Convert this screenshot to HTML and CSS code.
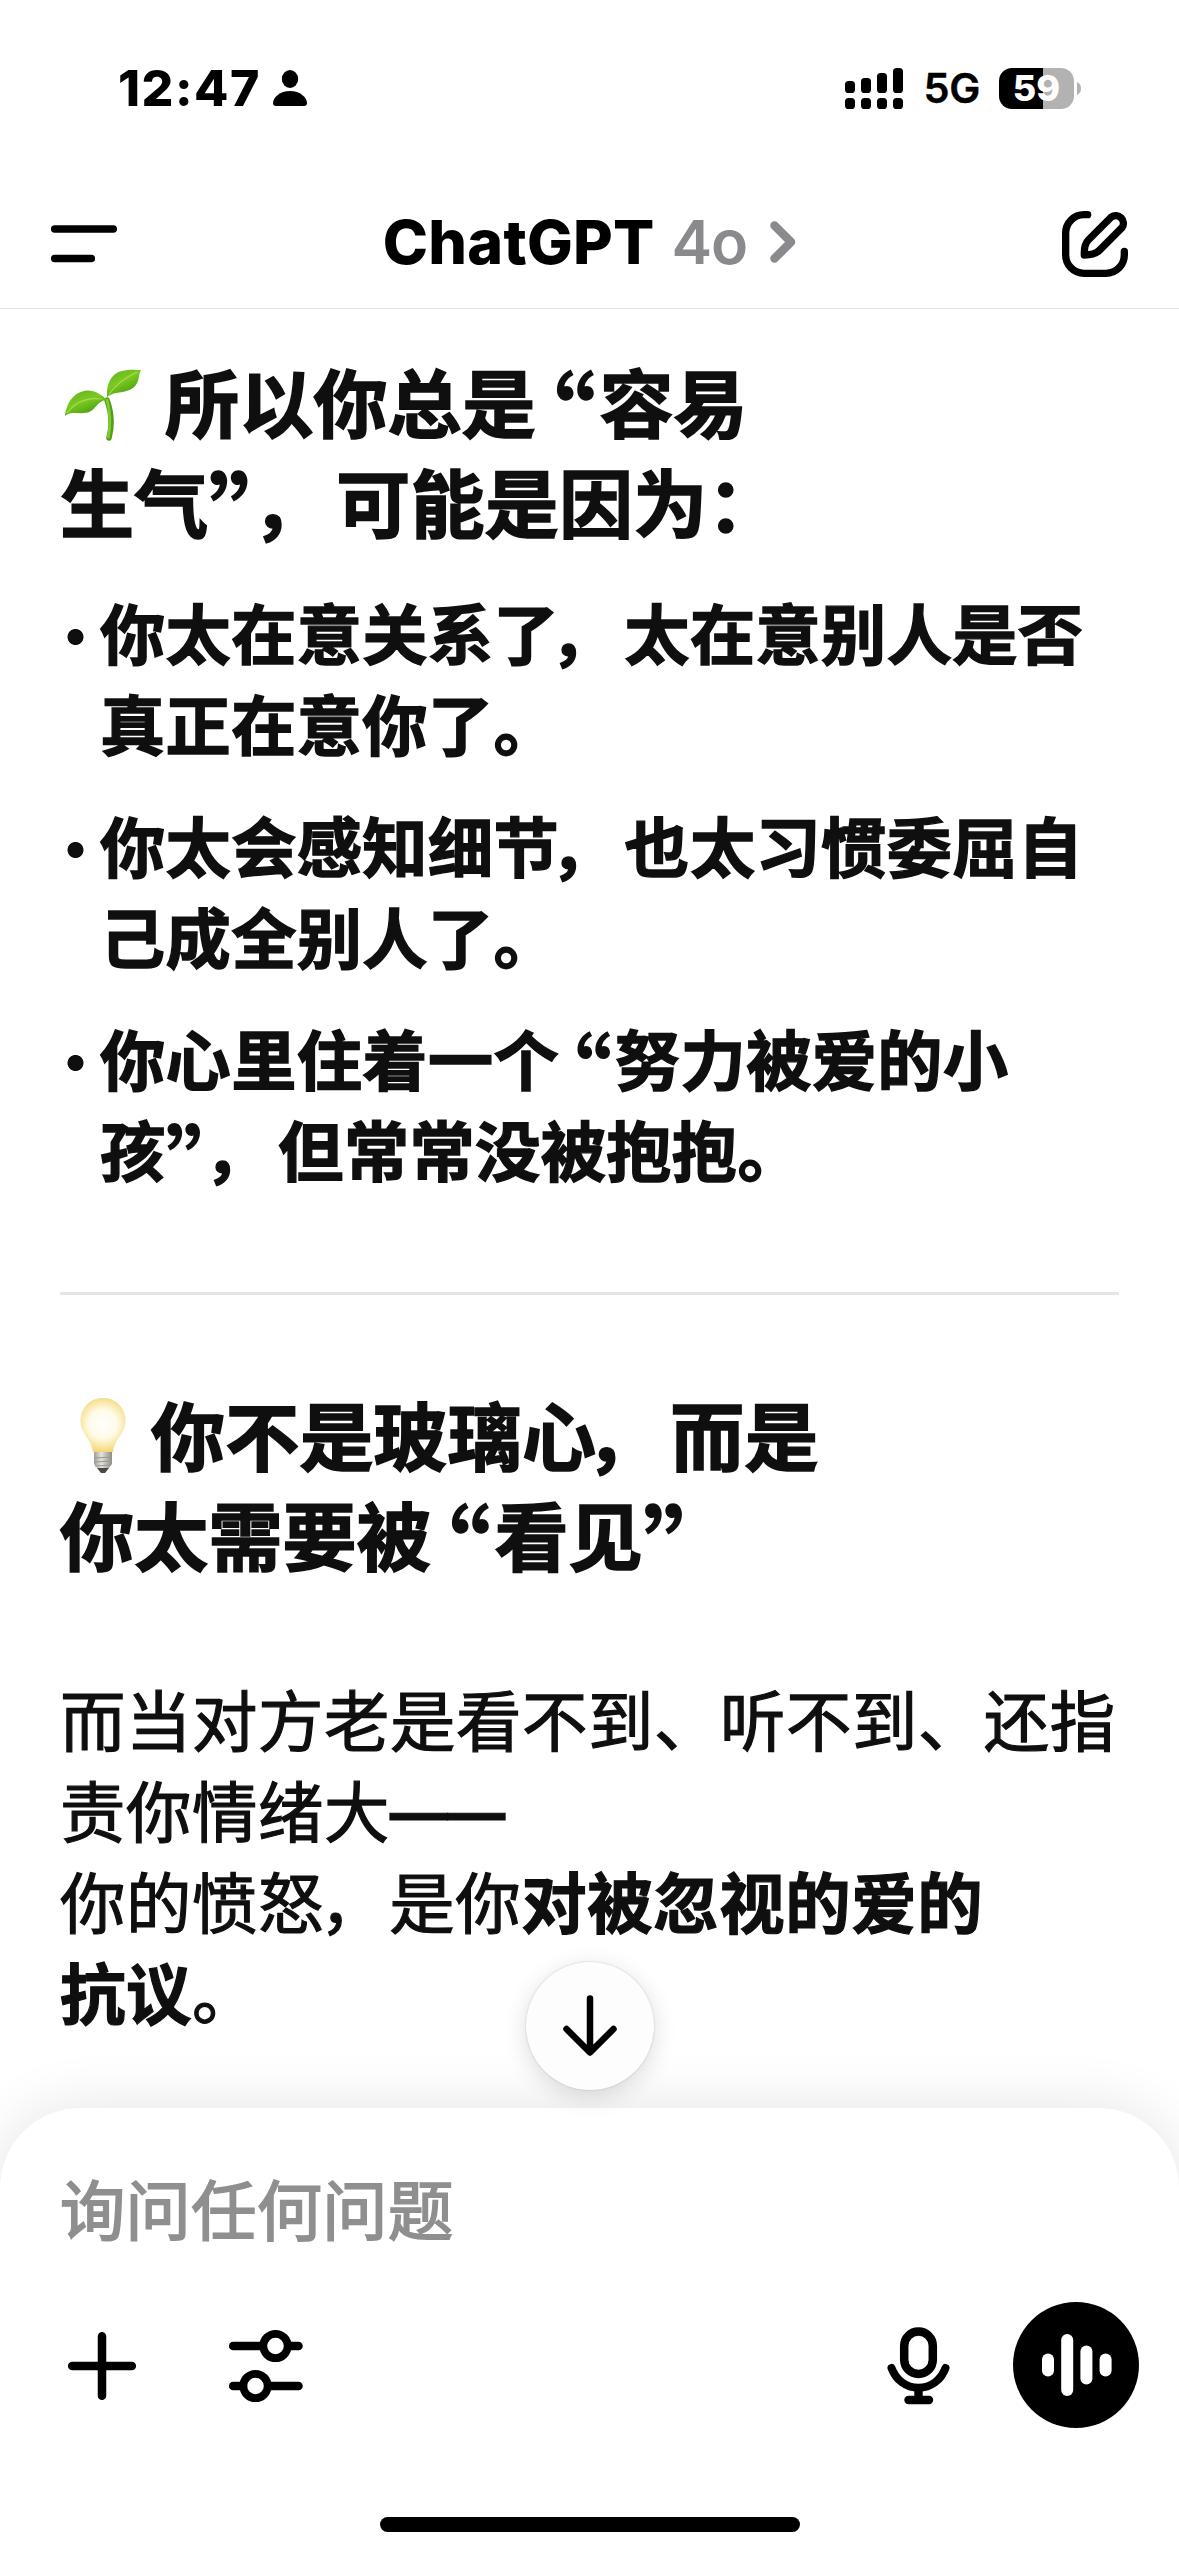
FILE: index.html
```html
<!DOCTYPE html>
<html lang="zh-CN">
<head>
    <meta charset="UTF-8">
    <meta name="viewport" content="width=device-width, initial-scale=1.0">
    <title>ChatGPT</title>
    <link rel="stylesheet" href="styles.css">
</head>
<body>
    <div class="status-bar">
        <div class="status-left">
            <span class="time">12:47</span>
            <svg class="person" width="34" height="36" viewBox="0 0 34 36">
                <ellipse cx="17" cy="9" rx="8.2" ry="9"/>
                <path d="M17 21C27 21 34 27.5 34 33C34 35 33 36 31 36H3C1 36 0 35 0 33C0 27.5 7 21 17 21Z"/>
            </svg>
        </div>
        <div class="status-right">
            <svg class="signal" width="58" height="41" viewBox="0 0 58 41">
                <rect x="0" y="13" width="10" height="12" rx="3.6"/>
                <rect x="16" y="10" width="10" height="15" rx="3.6"/>
                <rect x="32" y="5" width="10" height="20" rx="3.6"/>
                <rect x="48" y="0" width="10" height="25" rx="3.6"/>
                <rect x="0" y="30" width="10" height="11" rx="3.6"/>
                <rect x="16" y="30" width="10" height="11" rx="3.6"/>
                <rect x="32" y="30" width="10" height="11" rx="3.6"/>
                <rect x="48" y="30" width="10" height="11" rx="3.6"/>
            </svg>
            <span class="network">5G</span>
            <div class="battery"><span>59</span></div>
            <svg class="battery-cap" width="4" height="13" viewBox="0 0 4 13"><path d="M0 0C2.500 1 4 3.500 4 6.500S2.500 12 0 13Z"/></svg>
        </div>
    </div>

    <header>
        <svg width="66" height="38" viewBox="0 0 66 38" class="line-icon">
            <path d="M3.700 4H62.300M3.700 33.500H40.300" stroke-width="7.500"/>
        </svg>
        <div class="title">
            <h1>ChatGPT</h1>
            <span class="model">4o</span>
            <svg class="chevron" width="26" height="42" viewBox="0 0 26 42"><path d="M4.500 4.500L21 21L4.500 37.500"/></svg>
        </div>
        <svg width="66" height="66" viewBox="0 0 198 198" class="line-icon">
            <path d="M77 11H66A55 55 0 0 0 11 66V132A55 55 0 0 0 66 187H132A55 55 0 0 0 187 132V121" stroke-width="22"/>
            <path d="M148 18A23 23 0 0 1 180 50L112 118C103 127 90 132 67 132C66 110 70 96 79 87Z" stroke-width="22"/>
        </svg>
    </header>

    <main>
        <h2>
            <svg class="sprout" width="78" height="72" viewBox="0 0 78 72">
                <defs>
                    <linearGradient id="leaf" x1="0" y1="0" x2="0.6" y2="1">
                        <stop offset="0" stop-color="#5fb018"/>
                        <stop offset="0.5" stop-color="#7cc924"/>
                        <stop offset="1" stop-color="#429a08"/>
                    </linearGradient>
                </defs>
                <path d="M43 31C47 42 49 54 45 69" fill="none" stroke="#4f9f10" stroke-width="5.500" stroke-linecap="round"/>
                <path d="M43 31C46 42 47 54 44.500 68" fill="none" stroke="#7ccb30" stroke-width="2.800" stroke-linecap="round"/>
                <path d="M1 47C2 35 9 24 20 22C29 20 38 26 43 31C35 31 33 38 27 42C19 47 7 41 1 47Z" fill="url(#leaf)"/>
                <path d="M43 28C42 14 48 4 58 2C65 0 72 1 77 1C74 6 76 14 69 19C61 25 49 22 43 28Z" fill="url(#leaf)"/>
                <path d="M3 44C11 33 23 28 38 30M45 25C51 17 60 9 73 3" fill="none" stroke="#a4dd4c" stroke-width="1.200"/>
            </svg>所以你总是<span class="quote open">“</span>容易<br>
            生气<span class="quote">”</span><span class="comma">，</span>可能是因为：
        </h2>
        <ul>
            <li>你太在意关系了<span class="comma">，</span>太在意别人是否<br>真正在意你了。</li>
            <li>你太会感知细节<span class="comma">，</span>也太习惯委屈自<br>己成全别人了。</li>
            <li>你心里住着一个<span class="quote open">“</span>努力被爱的小<br>孩<span class="quote">”</span><span class="comma">，</span>但常常没被抱抱。</li>
        </ul>
        <hr>
        <h2>
            <svg class="bulb" width="46" height="76" viewBox="0 0 46 76">
                <defs>
                    <radialGradient id="glow" gradientUnits="userSpaceOnUse" cx="23" cy="26" r="28">
                        <stop offset="0" stop-color="#fffefa"/>
                        <stop offset="0.5" stop-color="#fffbea"/>
                        <stop offset="0.8" stop-color="#f9e7a6"/>
                        <stop offset="1" stop-color="#f3d677"/>
                    </radialGradient>
                    <linearGradient id="screw" x1="0" x2="1" y1="0" y2="0">
                        <stop offset="0" stop-color="#a09c96"/>
                        <stop offset="0.4" stop-color="#e6e3dd"/>
                        <stop offset="1" stop-color="#8f8b85"/>
                    </linearGradient>
                </defs>
                <path d="M23 0C36 0 45.500 10 45.500 23C45.500 36 34 42 33 54H13C12 42 0.500 36 0.500 23C0.500 10 10 0 23 0Z" fill="url(#glow)"/>
                <path d="M14 54H32V66L29 70H17L14 66Z" fill="url(#screw)"/>
                <path d="M17 70H29L25 75H21Z" fill="#4a4845"/>
                <path d="M14 60L32 59M14 64L32 63M15 68L31 67" stroke="#9a9690" stroke-width="1"/>
            </svg>你不是玻璃心<span class="comma">，</span>而是<br>
            你太需要被<span class="quote open">“</span>看见<span class="quote">”</span>
        </h2>
        <p>
            而当对方老是看不到、听不到、还指<br>
            责你情绪大<span class="dash">——</span><br>
            你的愤怒<span class="comma">，</span>是你<strong>对被忽视的爱的</strong><br>
            <strong>抗议</strong>。
        </p>
    </main>

    <footer>
        <button class="scroll-down">
            <svg width="54" height="62" viewBox="0 0 54 62" class="line-icon"><path d="M27 3.500V57M3.500 34L27 57.500L50.500 34" stroke-width="6.500"/></svg>
        </button>
        <div class="placeholder">询问任何问题</div>
        <div class="tools">
            <svg width="68" height="68" viewBox="0 0 68 68" class="line-icon"><path d="M34 4.200V63.800M4.200 34H63.800" stroke-width="8.500"/></svg>
            <svg width="74" height="74" viewBox="0 0 74 74" class="line-icon sliders">
                <path d="M4.200 17H33M60 17H69.500M4.200 57H14M40 57H69.500" stroke-width="8.500"/>
                <circle cx="46.500" cy="17" r="12.200" stroke-width="7.800"/>
                <circle cx="26.500" cy="57" r="12.200" stroke-width="7.800"/>
            </svg>
            <svg width="64" height="78" viewBox="0 0 64 78" class="line-icon mic">
                <rect x="17.200" y="4.500" width="28.600" height="42.500" rx="14.300" stroke-width="8.500"/>
                <path d="M4.500 41C9 53 19 60.800 31.500 60.800S54 53 58.500 41" stroke-width="8"/>
                <path d="M31.500 62V71M21.500 73H42" stroke-width="8.400"/>
            </svg>
            <button class="voice">
                <svg width="70" height="62" viewBox="0 0 70 62">
                    <rect x="0" y="19.500" width="12" height="23" rx="6"/>
                    <rect x="19.200" y="0" width="12" height="62" rx="6"/>
                    <rect x="38.400" y="11.500" width="12" height="39" rx="6"/>
                    <rect x="57.600" y="19.500" width="12" height="23" rx="6"/>
                </svg>
            </button>
        </div>
        <div class="home-bar"></div>
    </footer>
</body>
</html>
```

FILE: styles.css
```css
* {
    box-sizing: border-box;
}
body {
    margin: 0;
    width: 1179px;
    height: 2556px;
    display: flex;
    flex-direction: column;
    overflow: hidden;
    background: #fff;
    color: #0f0f0f;
    font-family: 'Noto Sans CJK SC', sans-serif;
    text-spacing-trim: space-all;
}
svg {
    display: block;
    flex-shrink: 0;
}
button {
    border: none;
    padding: 0;
    display: flex;
    align-items: center;
    justify-content: center;
    border-radius: 50%;
}
.line-icon {
    fill: none;
    stroke: #000;
    stroke-linecap: round;
    stroke-linejoin: round;
}

/* status bar */
.status-bar {
    height: 176px;
    padding: 0 98px 0 118px;
    display: flex;
    justify-content: space-between;
    align-items: center;
    font-family: Inter, sans-serif;
    color: #000;
}
.status-left,
.status-right {
    display: flex;
    align-items: center;
}
.time {
    font-size: 50px;
    font-weight: 800;
    letter-spacing: 1.5px;
}
.person {
    margin-left: 12px;
}
.network {
    font-size: 41.5px;
    font-weight: 600;
    margin: 0 19px 0 20px;
    letter-spacing: -0.3px;
    -webkit-text-stroke: 0.4px #000;
}
.battery {
    width: 75px;
    height: 41px;
    border-radius: 13px;
    background: linear-gradient(to right, #000 44px, #b2b2b2 44px);
    color: #fff;
    font-size: 36px;
    font-weight: 800;
    line-height: 41px;
    text-align: center;
}
.battery-cap {
    margin-left: 3px;
    fill: #b2b2b2;
}

/* title row */
header {
    height: 133px;
    padding: 3px 51px 0;
    display: flex;
    justify-content: space-between;
    align-items: center;
    border-bottom: 1px solid #e3e3e3;
    font-family: Inter, sans-serif;
    color: #000;
}
.title {
    display: flex;
    align-items: center;
    padding-bottom: 3px;
    font-size: 61px;
}
h1 {
    margin: 0;
    font-size: 61px;
    font-weight: 800;
    letter-spacing: 0.2px;
}
.model {
    margin-left: 17px;
    color: #8a8a8e;
    font-weight: 600;
    letter-spacing: -1px;
}
.chevron {
    margin-left: 23px;
    fill: none;
    stroke: #8a8a8e;
    stroke-width: 8.5;
    stroke-linecap: round;
    stroke-linejoin: round;
}

/* conversation */
main {
    flex: 1;
    padding: 41px 60px 0;
    white-space: nowrap;
}
h2 {
    margin: 0;
    font-size: 74px;
    font-weight: 700;
    line-height: 100px;
    letter-spacing: 0.2px;
    -webkit-text-stroke: 1.6px #0f0f0f;
}
h2 svg {
    display: inline-block;
}
.sprout {
    margin: 0 23px 0 4px;
    vertical-align: -9px;
}
.bulb {
    margin: 0 25px 0 20px;
    vertical-align: -9px;
}
.quote {
    display: inline-block;
    width: 0.54em;
    height: 0.7em;
    padding-right: 0.06em;
    font-size: 1.35em;
    line-height: 0.7em;
    vertical-align: -0.245em;
    text-align: center;
    font-feature-settings: "palt";
    -webkit-text-stroke: 0;
}
.quote.open {
    width: 0.635em;
    padding: 0 0 0 0.07em;
}
.comma {
    display: inline-block;
    width: 1em;
    font-feature-settings: "palt";
}
ul {
    list-style: none;
    margin: 35px 0 0;
    padding: 0;
    display: flex;
    flex-direction: column;
    gap: 31px;
}
li {
    display: flow-root;
    padding-left: 40px;
    font-size: 65.2px;
    font-weight: 700;
    line-height: 91px;
    letter-spacing: 0.4px;
    -webkit-text-stroke: 1.4px #0f0f0f;
    background: radial-gradient(circle at 15.5px 52px, #0f0f0f 7.6px, transparent 8.4px);
}
hr {
    height: 3px;
    margin: 99px 0 88px;
    border: none;
    background: #e6e6e6;
}
p {
    margin: 89px 0 0;
    font-size: 65.4px;
    line-height: 91px;
    letter-spacing: 0.6px;
    -webkit-text-stroke: 1.2px #0f0f0f;
}
strong {
    font-weight: 700;
}
.dash {
    font-family: Inter, sans-serif;
    font-size: 0.88em;
    font-weight: 700;
    line-height: 1;
    letter-spacing: 0;
    vertical-align: 3px;
}

/* composer */
footer {
    position: relative;
    height: 448px;
    padding: 0 40px 0 60px;
    border-radius: 80px 80px 0 0;
    background: #fff;
    box-shadow: 0 0 60px rgba(0, 0, 0, 0.11);
}
.scroll-down {
    position: absolute;
    left: 526px;
    top: -146px;
    width: 128px;
    height: 128px;
    background: #fdfdfd;
    box-shadow: 0 0 2px rgba(0, 0, 0, 0.2), 0 6px 24px rgba(0, 0, 0, 0.14);
}
.placeholder {
    padding-top: 53px;
    font-size: 65.2px;
    line-height: 92px;
    letter-spacing: 0.4px;
    color: #8f8f8f;
    -webkit-text-stroke: 1.8px #8f8f8f;
}
.tools {
    margin-top: 49px;
    padding-left: 8px;
    height: 128px;
    display: flex;
    align-items: center;
}
.sliders {
    margin-left: 93px;
}
.mic {
    margin: 0 62px 0 auto;
}
.voice {
    width: 126px;
    height: 126px;
    margin-bottom: 2px;
    padding-left: 2px;
    background: #000;
}
.voice svg {
    fill: #fff;
}
.home-bar {
    width: 420px;
    height: 15px;
    margin: 87px 0 0 320px;
    border-radius: 8px;
    background: #000;
}
```
